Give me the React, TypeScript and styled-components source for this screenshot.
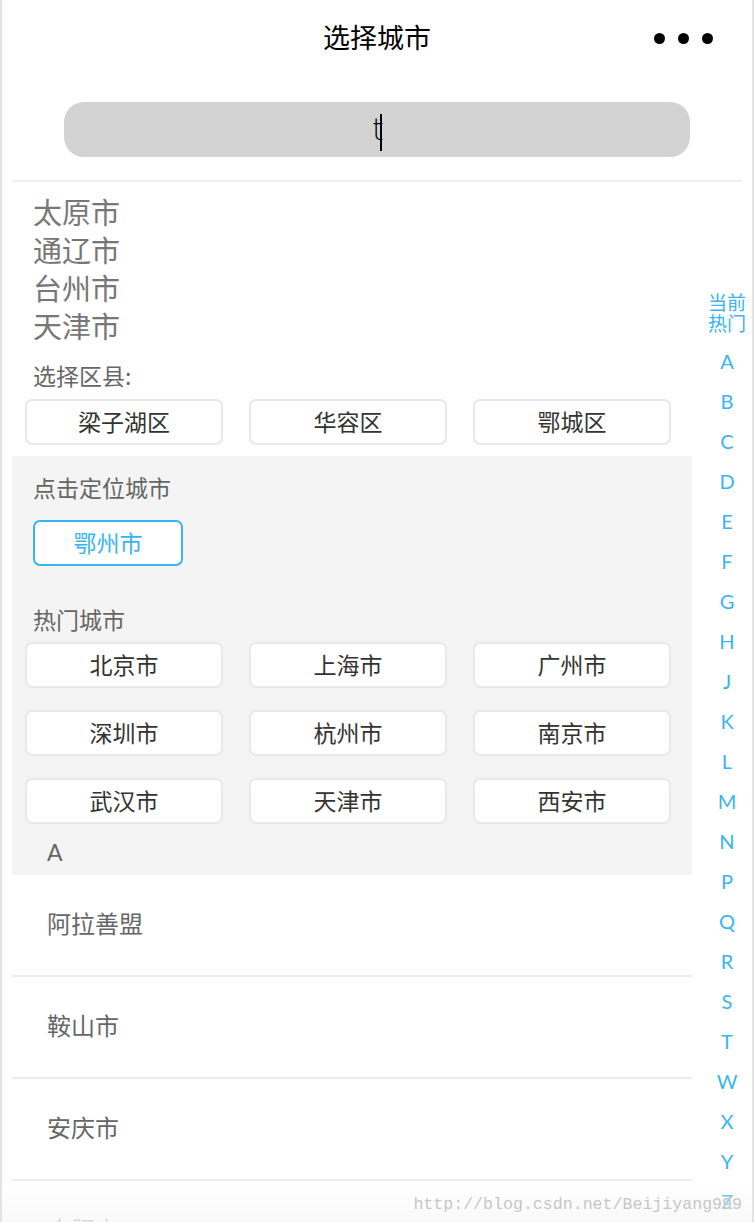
import styled, { createGlobalStyle } from "styled-components";

const GlobalStyle = createGlobalStyle`
  html, body {
    margin: 0;
    padding: 0;
    background: #fff;
  }
  body {
    font-family: "Noto Sans CJK SC", "Noto Sans", sans-serif;
  }
`;

const blue = "#38b4f4";

const Frame = styled.div`
  position: relative;
  width: 754px;
  height: 1222px;
  overflow: hidden;
  box-sizing: border-box;
  border-left: 2px solid #e4e4e4;
  border-right: 2px solid #e4e4e4;
  padding: 0 10px;
  background: #fff;
`;

const Header = styled.div`
  height: 76px;
  display: grid;
  grid-template-columns: 1fr auto 1fr;
  align-items: center;
`;

const Title = styled.div`
  grid-column: 2;
  font-size: 27px;
  color: #000;
  line-height: 1;
  margin-top: -4px;
`;

const Dots = styled.div`
  justify-self: end;
  display: flex;
  gap: 13px;
  padding-right: 29px;

  span {
    width: 11px;
    height: 11px;
    border-radius: 50%;
    background: #000;
  }
`;

const SearchWrap = styled.div`
  padding: 26px 0 23px;
  border-bottom: 2px solid #eeeeee;
`;

const SearchBar = styled.div`
  width: 626px;
  height: 55px;
  margin: 0 auto;
  border-radius: 20px;
  background: #d3d3d3;
  display: flex;
  align-items: center;
  justify-content: center;
  font-family: "DejaVu Sans", sans-serif;
  font-weight: 300;
  font-size: 30px;
  color: #000;
`;

const Caret = styled.span`
  display: inline-block;
  width: 2px;
  height: 37px;
  background: #000;
  margin-left: -4px;
  transform: translateY(3px);
`;

const Body = styled.div`
  display: flex;
`;

const Main = styled.div`
  width: 680px;
  flex-shrink: 0;
`;

const Results = styled.div`
  padding: 10px 0 0 21px;
`;

const ResultCity = styled.div`
  font-size: 29px;
  line-height: 38px;
  color: #777;
`;

const Label = styled.div<{ $indent?: number }>`
  font-size: 23px;
  line-height: 30px;
  color: #666;
  padding-left: ${(p) => p.$indent ?? 21}px;
`;

const ButtonGrid = styled.div`
  display: grid;
  grid-template-columns: repeat(3, 198px);
  column-gap: 26px;
  row-gap: 22px;
  padding-left: 13px;
`;

const CityButton = styled.div<{ $active?: boolean }>`
  box-sizing: border-box;
  height: 46px;
  width: ${(p) => (p.$active ? "150px" : "auto")};
  border: 2px solid ${(p) => (p.$active ? blue : "#e8e8e8")};
  border-radius: 7px;
  background: #fff;
  display: flex;
  align-items: center;
  justify-content: center;
  padding-bottom: 3px;
  font-size: 23px;
  color: ${(p) => (p.$active ? blue : "#333")};
`;

const Gray = styled.div`
  margin-top: 11px;
  background: #f4f4f4;
  padding: 16px 0 8px;
`;

const LocateRow = styled.div`
  padding: 18px 0 38px 21px;
`;

const Letter = styled.div`
  margin-top: 13px;
  padding-left: 35px;
  font-family: "Lato", "Liberation Sans", sans-serif;
  font-size: 23px;
  line-height: 30px;
  color: #666;
`;

const ListItem = styled.div`
  height: 102px;
  box-sizing: border-box;
  display: flex;
  align-items: center;
  padding: 0 0 5px 35px;
  font-size: 24px;
  color: #666;
  border-bottom: 2px solid #ececec;
`;

const IndexBar = styled.div`
  flex: 1;
  padding: 110px 0 0 10px;
  display: flex;
  flex-direction: column;
  align-items: center;
  white-space: nowrap;
  color: ${blue};
`;

const IndexHot = styled.div`
  font-size: 19px;
  line-height: 21px;
  text-align: center;
  margin-bottom: 8px;
  margin-top: -1px;
  transform: translateX(5px);
`;

const IndexLetter = styled.div`
  font-family: "Lato", "Liberation Sans", sans-serif;
  font-size: 20px;
  line-height: 40px;
  transform: translateX(5px);
`;

const Fade = styled.div`
  position: absolute;
  left: 0;
  right: 0;
  bottom: 0;
  height: 38px;
  background: linear-gradient(rgba(248, 248, 248, 0), rgba(248, 248, 248, 0.85));
`;

const Watermark = styled.div`
  position: absolute;
  right: 10px;
  bottom: 8px;
  font-family: "Liberation Mono", "DejaVu Sans Mono", monospace;
  font-size: 16.6px;
  color: #c6c6c6;
`;

const results = ["太原市", "通辽市", "台州市", "天津市"];
const districts = ["梁子湖区", "华容区", "鄂城区"];
const hotCities = ["北京市", "上海市", "广州市", "深圳市", "杭州市", "南京市", "武汉市", "天津市", "西安市"];
const aCities = ["阿拉善盟", "鞍山市", "安庆市", "合肥市"];
const letters = "ABCDEFGHJKLMNPQRSTWXYZ".split("");

export default function App() {
  return (
    <>
      <GlobalStyle />
      <Frame>
        <Header>
          <Title>选择城市</Title>
          <Dots>
            <span />
            <span />
            <span />
          </Dots>
        </Header>
        <SearchWrap>
          <SearchBar>
            t<Caret />
          </SearchBar>
        </SearchWrap>
        <Body>
          <Main>
            <Results>
              {results.map((c) => (
                <ResultCity key={c}>{c}</ResultCity>
              ))}
            </Results>
            <Label style={{ marginTop: 16, marginBottom: 9 }}>选择区县:</Label>
            <ButtonGrid>
              {districts.map((d) => (
                <CityButton key={d}>{d}</CityButton>
              ))}
            </ButtonGrid>
            <Gray>
              <Label>点击定位城市</Label>
              <LocateRow>
                <CityButton $active>鄂州市</CityButton>
              </LocateRow>
              <Label style={{ marginBottom: 8 }}>热门城市</Label>
              <ButtonGrid>
                {hotCities.map((c, i) => (
                  <CityButton key={c + i}>{c}</CityButton>
                ))}
              </ButtonGrid>
              <Letter>A</Letter>
            </Gray>
            {aCities.map((c) => (
              <ListItem key={c}>{c}</ListItem>
            ))}
          </Main>
          <IndexBar>
            <IndexHot>
              当前
              <br />
              热门
            </IndexHot>
            {letters.map((l) => (
              <IndexLetter key={l}>{l}</IndexLetter>
            ))}
          </IndexBar>
        </Body>
        <Fade />
        <Watermark>http://blog.csdn.net/Beijiyang999</Watermark>
      </Frame>
    </>
  );
}
